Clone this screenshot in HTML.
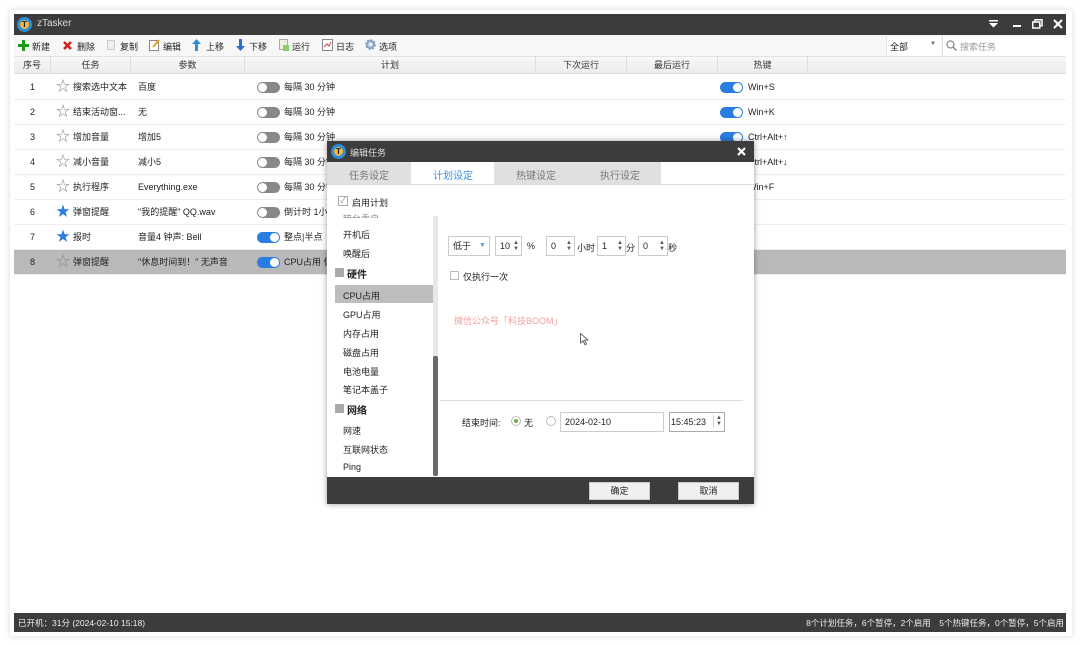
<!DOCTYPE html>
<html><head><meta charset="utf-8"><style>
*{margin:0;padding:0;box-sizing:border-box}
body{width:1080px;height:645px;background:#fff;position:relative;overflow:hidden;font-family:"Liberation Sans","Noto Sans CJK SC",sans-serif;font-size:9px;color:#222}
.a{position:absolute;white-space:nowrap}
.tg{position:absolute;width:23px;height:11px;border-radius:6px;background:#888}
.tg:after{content:"";position:absolute;left:1px;top:1px;width:9px;height:9px;border-radius:50%;background:#fff}
.tg.on{background:#2a7de1}.tg.on:after{left:13px}
.row{position:absolute;left:14px;width:1052px;height:25px;border-bottom:1px solid #eee}
.hd{position:absolute;top:57px;height:17px;border-right:1px solid #ddd;text-align:center;line-height:17px;color:#333}
.box{position:absolute;border:1px solid #ccc;background:#fff;height:20px;line-height:18px;padding-left:4px}
.sp{position:absolute;right:2px;top:3px;font-size:6px;line-height:6px;color:#555}
.li{position:absolute;left:343px;font-size:9px}
.col{position:absolute;top:75px}
.col div{height:25px;line-height:25px}
</style></head><body>
<div class="a" style="left:10px;top:10px;width:1062px;height:626px;box-shadow:0 0 6px rgba(0,0,0,.15)"></div>
<div class="a" style="left:14px;top:14px;width:1052px;height:618px;background:#fff"></div>
<!-- title -->
<div class="a" style="left:14px;top:14px;width:1052px;height:21px;background:#3c3c3c"></div>
<div class="a" style="left:17px;top:17px;width:15px;height:15px;border-radius:50%;background:#2a8fd8"></div>
<div class="a" style="left:20px;top:20px;width:9px;height:9px;border-radius:50%;background:#f4b73a;color:#222;font-size:8px;line-height:9px;text-align:center;font-weight:bold">T</div>
<div class="a" style="left:37px;top:18px;color:#ddd;font-size:10px">zTasker</div>
<svg class="a" style="left:989px;top:20px" width="9" height="8"><rect x="0" y="0" width="9" height="1.5" fill="#fff"/><path d="M0 3h9l-4.5 4.5z" fill="#fff"/></svg>
<div class="a" style="left:1013px;top:25px;width:8px;height:2px;background:#fff"></div>
<svg class="a" style="left:1032px;top:19px" width="11" height="10"><rect x="3" y="0.75" width="7" height="6" fill="none" stroke="#fff" stroke-width="1.5"/><rect x="0.75" y="3" width="7" height="6" fill="#3c3c3c" stroke="#fff" stroke-width="1.5"/></svg>
<svg class="a" style="left:1053px;top:19px" width="10" height="10"><path d="M1 1L9 9M9 1L1 9" stroke="#fff" stroke-width="2.2"/></svg>
<!-- toolbar -->
<div class="a" style="left:14px;top:35px;width:1052px;height:22px;background:#f7f7f7;border-bottom:1px solid #e2e2e2"></div>
<svg class="a" style="left:18px;top:40px" width="11" height="11"><path d="M5.5 0v11M0 5.5h11" stroke="#1a9a1a" stroke-width="3"/></svg>
<div class="a" style="left:32px;top:40px">新建</div>
<svg class="a" style="left:63px;top:41px" width="9" height="9"><path d="M1 1L8 8M8 1L1 8" stroke="#d02020" stroke-width="2.5"/></svg>
<div class="a" style="left:77px;top:40px">删除</div>
<div class="a" style="left:107px;top:40px;width:8px;height:10px;background:#eee;border:1px solid #ccc"></div>
<div class="a" style="left:120px;top:40px">复制</div>
<svg class="a" style="left:149px;top:39px" width="11" height="12"><rect x="0.5" y="1.5" width="9" height="10" fill="#fff" stroke="#888"/><path d="M4 8L10 1" stroke="#e0a020" stroke-width="2"/></svg>
<div class="a" style="left:163px;top:40px">编辑</div>
<svg class="a" style="left:192px;top:39px" width="9" height="12"><path d="M4.5 0L9 5H6v7H3V5H0z" fill="#2a8fd8"/></svg>
<div class="a" style="left:206px;top:40px">上移</div>
<svg class="a" style="left:236px;top:39px" width="9" height="12"><path d="M4.5 12L9 7H6V0H3v7H0z" fill="#2a6fd8"/></svg>
<div class="a" style="left:249px;top:40px">下移</div>
<div class="a" style="left:279px;top:39px;width:9px;height:11px;background:#eef0e0;border:1px solid #aaa"></div>
<div class="a" style="left:283px;top:45px;width:6px;height:6px;background:#8c6"></div>
<div class="a" style="left:292px;top:40px">运行</div>
<svg class="a" style="left:322px;top:39px" width="11" height="12"><rect x="0.5" y="0.5" width="10" height="11" fill="#fff" stroke="#888"/><path d="M2 8l3-3 2 2 2-4" stroke="#d04040" fill="none"/></svg>
<div class="a" style="left:336px;top:40px">日志</div>
<svg class="a" style="left:365px;top:39px" width="11" height="11"><circle cx="5.5" cy="5.5" r="4.5" fill="#9ac" stroke="#6a9ab0" stroke-width="1.5" stroke-dasharray="2 1.5"/><circle cx="5.5" cy="5.5" r="2" fill="#eef"/></svg>
<div class="a" style="left:379px;top:40px">选项</div>
<div class="a" style="left:886px;top:36px;width:55px;height:20px;background:#fff;border-left:1px solid #e2e2e2"></div>
<div class="a" style="left:890px;top:40px">全部</div>
<div class="a" style="left:930px;top:41px;color:#666;font-size:6px">▼</div>
<div class="a" style="left:942px;top:36px;width:124px;height:20px;background:#fff;border-left:1px solid #ddd"></div>
<svg class="a" style="left:946px;top:40px" width="11" height="11"><circle cx="4.5" cy="4.5" r="3.5" fill="none" stroke="#888" stroke-width="1.2"/><path d="M7 7l3.5 3.5" stroke="#888" stroke-width="1.5"/></svg>
<div class="a" style="left:960px;top:40px;color:#999">搜索任务</div>
<!-- header -->
<div class="a" style="left:14px;top:57px;width:1052px;height:17px;background:linear-gradient(#f8f8f8,#ececec);border-bottom:1px solid #ddd"></div>
<div class="hd" style="left:14px;width:37px">序号</div>
<div class="hd" style="left:51px;width:80px">任务</div>
<div class="hd" style="left:131px;width:114px">参数</div>
<div class="hd" style="left:245px;width:291px">计划</div>
<div class="hd" style="left:536px;width:91px">下次运行</div>
<div class="hd" style="left:627px;width:91px">最后运行</div>
<div class="hd" style="left:718px;width:90px">热键</div>
<!-- rows -->
<div class="row" style="top:75px"></div><div class="row" style="top:100px"></div><div class="row" style="top:125px"></div><div class="row" style="top:150px"></div><div class="row" style="top:175px"></div><div class="row" style="top:200px"></div><div class="row" style="top:225px"></div>
<div class="row" style="top:250px;background:#b9b9b9"></div>
<div class="col" style="left:30px"><div>1</div><div>2</div><div>3</div><div>4</div><div>5</div><div>6</div><div>7</div><div>8</div></div>
<div class="col" style="left:56px;font-size:14px;color:#888;top:74px"><div>☆</div><div>☆</div><div>☆</div><div>☆</div><div>☆</div><div style="color:#2a7de1">★</div><div style="color:#2a7de1">★</div><div>☆</div></div>
<div class="col" style="left:73px"><div>搜索选中文本</div><div>结束活动窗...</div><div>增加音量</div><div>减小音量</div><div>执行程序</div><div>弹窗提醒</div><div>报时</div><div>弹窗提醒</div></div>
<div class="col" style="left:138px"><div>百度</div><div>无</div><div>增加5</div><div>减小5</div><div>Everything.exe</div><div>"我的提醒" QQ.wav</div><div>音量4 钟声: Bell</div><div>"休息时间到！" 无声音</div></div>
<div class="tg" style="left:257px;top:82px"></div><div class="tg" style="left:257px;top:107px"></div><div class="tg" style="left:257px;top:132px"></div><div class="tg" style="left:257px;top:157px"></div><div class="tg" style="left:257px;top:182px"></div><div class="tg" style="left:257px;top:207px"></div>
<div class="tg on" style="left:257px;top:232px"></div><div class="tg on" style="left:257px;top:257px"></div>
<div class="col" style="left:284px"><div>每隔 30 分钟</div><div>每隔 30 分钟</div><div>每隔 30 分钟</div><div>每隔 30 分钟</div><div>每隔 30 分钟</div><div>倒计时 1小时</div><div>整点|半点</div><div>CPU占用 低</div></div>
<div class="tg on" style="left:720px;top:82px"></div><div class="tg on" style="left:720px;top:107px"></div><div class="tg on" style="left:720px;top:132px"></div>
<div class="col" style="left:748px"><div>Win+S</div><div>Win+K</div><div>Ctrl+Alt+↑</div><div>Ctrl+Alt+↓</div><div>Win+F</div></div>
<!-- status -->
<div class="a" style="left:14px;top:613px;width:1052px;height:19px;background:#3c3c3c"></div>
<div class="a" style="left:18px;top:617px;color:#eee;font-size:8.5px">已开机：31分 (2024-02-10 15:18)</div>
<div class="a" style="right:16px;top:617px;color:#eee;font-size:8.5px">8个计划任务，6个暂停，2个启用　5个热键任务，0个暂停，5个启用</div>
<!-- dialog -->
<div class="a" style="left:327px;top:141px;width:427px;height:363px;background:#fff;box-shadow:0 0 6px rgba(0,0,0,.4)"></div>
<div class="a" style="left:327px;top:141px;width:427px;height:21px;background:#3c3c3c"></div>
<div class="a" style="left:331px;top:144px;width:15px;height:15px;border-radius:50%;background:#2a8fd8"></div>
<div class="a" style="left:334px;top:147px;width:9px;height:9px;border-radius:50%;background:#f4b73a;font-size:8px;line-height:9px;text-align:center;font-weight:bold">T</div>
<div class="a" style="left:350px;top:146px;color:#ddd">编辑任务</div>
<svg class="a" style="left:737px;top:147px" width="9" height="9"><path d="M1 1L8 8M8 1L1 8" stroke="#fff" stroke-width="2.2"/></svg>
<div class="a" style="left:327px;top:162px;width:334px;height:22px;background:#e0e0e0"></div>
<div class="a" style="left:411px;top:162px;width:83px;height:22px;background:#fff"></div>
<div class="a" style="left:327px;top:184px;width:427px;height:1px;background:#ddd"></div>
<div class="a" style="left:349px;top:167px;font-size:10px;color:#777">任务设定</div>
<div class="a" style="left:433px;top:167px;font-size:10px;color:#3a8ee6">计划设定</div>
<div class="a" style="left:516px;top:167px;font-size:10px;color:#777">热键设定</div>
<div class="a" style="left:600px;top:167px;font-size:10px;color:#777">执行设定</div>
<div class="a" style="left:338px;top:196px;width:10px;height:10px;border:1px solid #aaa;font-size:8px;line-height:8px;color:#888;text-align:center">✓</div>
<div class="a" style="left:352px;top:196px">启用计划</div>
<div class="li" style="top:212px;color:#888;height:6px;overflow:hidden">暗台重启</div>
<div class="li" style="top:228px">开机后</div>
<div class="li" style="top:247px">唤醒后</div>
<div class="a" style="left:335px;top:268px;width:9px;height:9px;background:#aaa"></div>
<div class="a" style="left:347px;top:266px;font-weight:bold;font-size:10px">硬件</div>
<div class="a" style="left:335px;top:285px;width:98px;height:18px;background:#bdbdbd"></div>
<div class="li" style="top:289px">CPU占用</div>
<div class="li" style="top:308px">GPU占用</div>
<div class="li" style="top:327px">内存占用</div>
<div class="li" style="top:346px">磁盘占用</div>
<div class="li" style="top:365px">电池电量</div>
<div class="li" style="top:383px">笔记本盖子</div>
<div class="a" style="left:335px;top:404px;width:9px;height:9px;background:#aaa"></div>
<div class="a" style="left:347px;top:402px;font-weight:bold;font-size:10px">网络</div>
<div class="li" style="top:424px">网速</div>
<div class="li" style="top:443px">互联网状态</div>
<div class="li" style="top:462px">Ping</div>
<div class="a" style="left:433px;top:216px;width:5px;height:260px;background:#e8e8e8"></div>
<div class="a" style="left:433px;top:356px;width:5px;height:120px;background:#6a6a6a;border-radius:2px"></div>
<div class="box" style="left:448px;top:236px;width:42px">低于<span class="a" style="left:30px;top:0;font-size:7px;color:#6b9ad8">▼</span></div>
<div class="box" style="left:495px;top:236px;width:27px">10<span class="sp">▲<br>▼</span></div>
<div class="a" style="left:527px;top:241px">%</div>
<div class="box" style="left:546px;top:236px;width:29px">0<span class="sp">▲<br>▼</span></div>
<div class="a" style="left:577px;top:241px">小时</div>
<div class="box" style="left:597px;top:236px;width:29px">1<span class="sp">▲<br>▼</span></div>
<div class="a" style="left:626px;top:241px">分</div>
<div class="box" style="left:638px;top:236px;width:30px">0<span class="sp">▲<br>▼</span></div>
<div class="a" style="left:668px;top:241px">秒</div>
<div class="a" style="left:450px;top:271px;width:9px;height:9px;border:1px solid #bbb"></div>
<div class="a" style="left:463px;top:270px">仅执行一次</div>
<div class="a" style="left:454px;top:314px;color:#f0a0a0">微信公众号「科技BOOM」</div>
<svg class="a" style="left:580px;top:333px" width="9" height="13"><path d="M0.5 0.5V10l2.5-2.3 2 4 1.5-.7-2-4H8z" fill="#fff" stroke="#444" stroke-width="0.8"/></svg>
<div class="a" style="left:440px;top:400px;width:303px;height:1px;background:#ddd"></div>
<div class="a" style="left:462px;top:416px">结束时间:</div>
<div class="a" style="left:511px;top:416px;width:10px;height:10px;border-radius:50%;border:1px solid #bbb"></div>
<div class="a" style="left:514px;top:419px;width:4px;height:4px;border-radius:50%;background:#6ab04c"></div>
<div class="a" style="left:524px;top:416px">无</div>
<div class="a" style="left:546px;top:416px;width:10px;height:10px;border-radius:50%;border:1px solid #bbb"></div>
<div class="box" style="left:560px;top:412px;width:104px">2024-02-10</div>
<div class="box" style="left:669px;top:412px;width:56px;border-color:#aaa;padding-left:1px">15:45:23<span class="sp" style="top:2px;border-left:1px solid #ccc;padding-left:2px">▲<br>▼</span></div>
<div class="a" style="left:327px;top:477px;width:427px;height:27px;background:#3c3c3c"></div>
<div class="a" style="left:589px;top:482px;width:61px;height:18px;background:#f0f0f0;border:1px solid #ccc;text-align:center;line-height:16px">确定</div>
<div class="a" style="left:678px;top:482px;width:61px;height:18px;background:#f0f0f0;border:1px solid #ccc;text-align:center;line-height:16px">取消</div>
</body></html>
